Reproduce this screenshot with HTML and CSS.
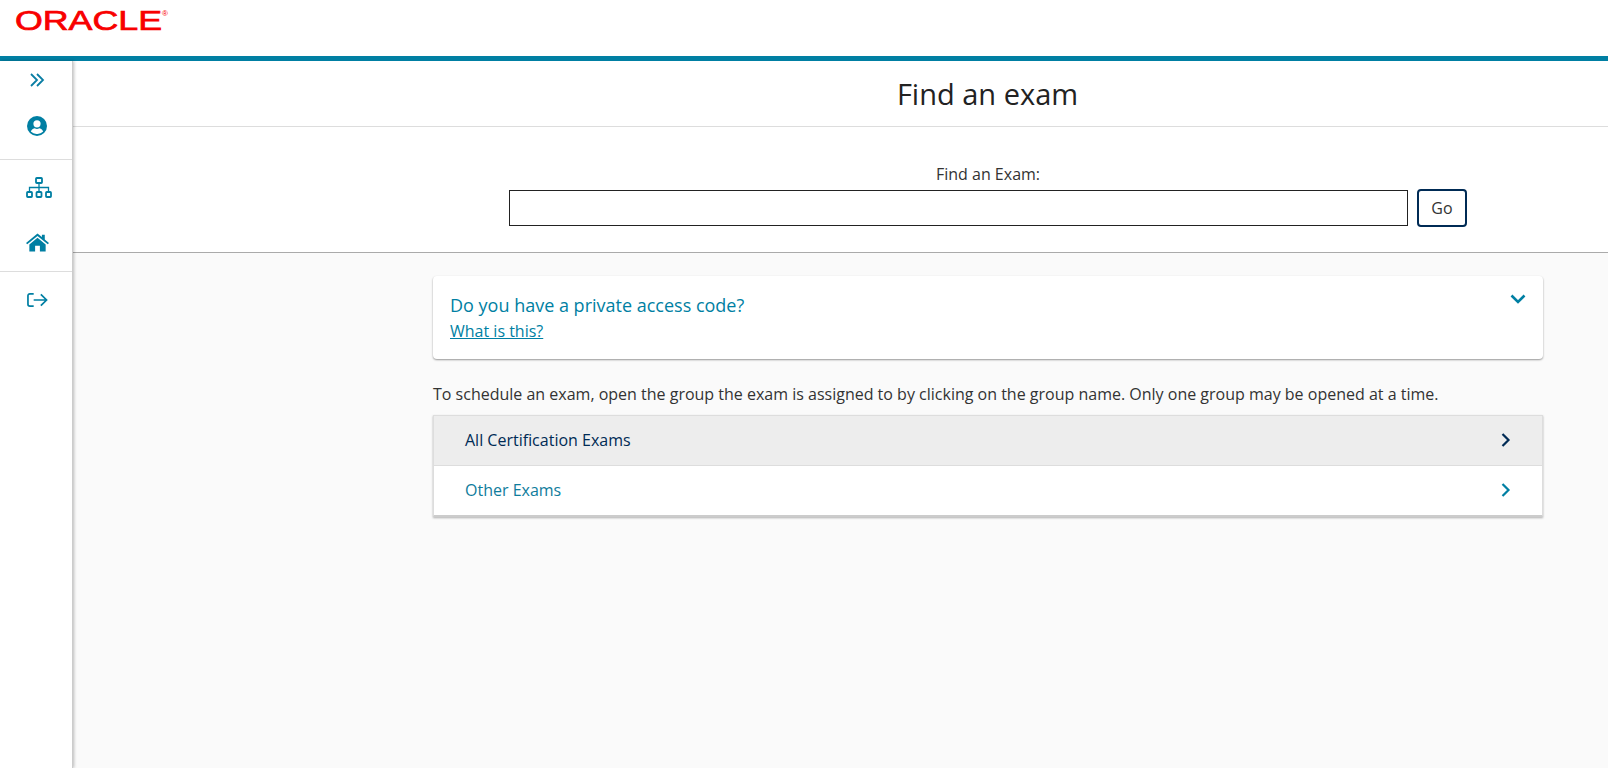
FILE: index.html
```html
<!DOCTYPE html>
<html lang="en">
<head>
<meta charset="utf-8">
<title>Find an exam</title>
<link rel="stylesheet" href="styles.css">
</head>
<body>
<header class="topbar">
  <svg class="logo" width="170" height="36" viewBox="0 0 170 36" role="img" aria-label="Oracle">
    <text class="logo-text" x="0" y="30" textLength="147" lengthAdjust="spacingAndGlyphs">ORACLE</text>
    <text class="logo-reg" x="147" y="16">®</text>
  </svg>
</header>
<div class="shell">
  <nav class="sidebar">
    <div class="nav-group nav-first">
      <svg class="ic-expand" width="16" height="14" viewBox="0 0 16 14"><path d="M2 1l6 6-6 6M8 1l6 6-6 6" fill="none" stroke="#0a7ea4" stroke-width="1.8"/></svg>
      <svg class="ic-user" width="20" height="20" viewBox="0 0 20 20"><circle cx="10" cy="10" r="10" fill="#007fa3"/><circle cx="10" cy="7.8" r="3.6" fill="#fff"/><path d="M3.8 15.6c1-2.6 3-3.3 3.9-3.3.8.4 1.5.6 2.3.6s1.500-.2 2.300-.6c.9 0 2.900.7 3.900 3.300A8 8 0 0 1 10 18a8 8 0 0 1-6.200-2.400z" fill="#fff"/></svg>
    </div>
    <div class="nav-group nav-second">
      <svg class="ic-tree" width="26" height="21" viewBox="0 0 26 21"><g fill="none" stroke="#007fa3" stroke-width="1.800"><rect x="10" y="1" width="6" height="5" rx=".8"/><rect x="1" y="15" width="5" height="5" rx=".8"/><rect x="10.500" y="15" width="5" height="5" rx=".8"/><rect x="20" y="15" width="5" height="5" rx=".8"/><path d="M13 6v9M3.500 15v-4.500h19V15" stroke-width="1.300"/></g></svg>
      <svg class="ic-home" width="23" height="19" viewBox="0 0 24 19"><path d="M12 0l4.600 3.800V1.500h3v4.800L24 10l-1.300 1.400L12 2.700 1.300 11.400 0 10z" fill="#007fa3"/><path d="M12 4.600l8.500 7V19h-6v-6h-5v6h-6v-7.400z" fill="#007fa3"/></svg>
    </div>
    <div class="nav-group nav-third">
      <svg class="ic-logout" width="21" height="16" viewBox="0 0 22 16"><path d="M7 1.500H3a2 2 0 0 0-2 2v9a2 2 0 0 0 2 2h4M7 8h13M14.500 2l6 6-6 6" fill="none" stroke="#007fa3" stroke-width="1.800"/></svg>
    </div>
  </nav>
  <main class="main">
    <div class="title-row"><h1 class="title">Find an exam</h1></div>
    <section class="search">
      <label class="search-label" for="exam">Find an Exam:</label>
      <div class="search-row">
        <input class="search-input" id="exam" type="text">
        <button class="go" type="button">Go</button>
      </div>
    </section>
    <div class="content">
      <section class="code-card">
        <div class="code-text">
          <h2 class="code-title">Do you have a private access code?</h2>
          <a class="code-link" href="#">What is this?</a>
        </div>
        <svg class="code-chev" width="16" height="10" viewBox="0 0 16 10"><path d="M1.500 1.500L8 8l6.500-6.500" fill="none" stroke="#007fa3" stroke-width="2.600"/></svg>
      </section>
      <p class="intro">To schedule an exam, open the group the exam is assigned to by clicking on the group name. Only one group may be opened at a time.</p>
      <div class="groups">
        <div class="group group-active">
          <span>All Certification Exams</span>
          <svg width="10" height="14" viewBox="0 0 10 14"><path d="M1.500 1l6 6-6 6" fill="none" stroke="#002b55" stroke-width="2.200"/></svg>
        </div>
        <div class="group group-plain">
          <span>Other Exams</span>
          <svg width="10" height="14" viewBox="0 0 10 14"><path d="M1.500 1l6 6-6 6" fill="none" stroke="#007fa3" stroke-width="2.200"/></svg>
        </div>
      </div>
    </div>
  </main>
</div>
</body>
</html>
```
FILE: styles.css
```css
* { box-sizing: border-box; }
html, body { margin: 0; height: 100%; }
body {
  font-family: "Open Sans", "Liberation Sans", sans-serif;
  color: #333;
  background: #fff;
  overflow: hidden;
}
.topbar {
  height: 61px;
  background: #fff;
  border-bottom: 5px solid #007fa3;
  padding: 0 0 0 15px;
}
.logo { display: block; }
.logo-text {
  font-family: "Liberation Sans", sans-serif;
  font-weight: 400;
  font-size: 27px;
  fill: #f80000;
  stroke: #f80000;
  stroke-width: .7px;
}
.logo-reg {
  font-family: "Liberation Sans", sans-serif;
  font-size: 8px;
  fill: #f80000;
}
.shell { display: flex; height: 707px; }
.sidebar {
  width: 73px;
  flex: none;
  background: #fff;
  border-right: 1px solid #ccc;
  box-shadow: 1px 0 3px rgba(0,0,0,.25);
  position: relative;
  z-index: 1;
}
.nav-group {
  display: flex;
  flex-direction: column;
  align-items: center;
  padding-left: 2px;
  border-bottom: 1px solid #ddd;
}
.nav-first { height: 99px; padding-top: 12px; gap: 29px; }
.nav-second { height: 112px; padding-top: 17px; gap: 35px; }
.ic-tree { margin-left: 3px; }
.nav-third { border-bottom: 0; padding-top: 20px; }
.main {
  flex: 1;
  display: flex;
  flex-direction: column;
  background: #fafafa;
}
.title-row {
  height: 66px;
  flex: none;
  background: #fff;
  border-bottom: 1px solid #ddd;
  padding: 0 67px 0 361px;
  display: flex;
  align-items: center;
  justify-content: center;
}
.title {
  margin: 1px 0 0;
  font-size: 29px;
  font-weight: 400;
  color: #222;
  line-height: 38px;
}
.search {
  height: 126px;
  flex: none;
  background: #fff;
  border-bottom: 1px solid #aaa;
  padding-top: 36px;
  display: flex;
  flex-direction: column;
  align-items: center;
  padding-left: 361px;
  padding-right: 66px;
}
.search-label { font-size: 16px; line-height: 22px; color: #333; }
.search-row { display: flex; align-items: center; gap: 9px; margin-top: 4px; margin-left: 0; }
.search-input {
  width: 899px;
  height: 36px;
  border: 1px solid #222;
  background: #fff;
}
.go {
  width: 50px;
  height: 38px;
  border: 2px solid #002b55;
  border-radius: 4px;
  background: #fff;
  color: #333;
  font: 16px "Open Sans", sans-serif;
  padding: 0;
}
.content { padding: 23px 65px 0 360px; }
.code-card {
  height: 83px;
  background: #fff;
  border-radius: 4px;
  box-shadow: 0 1px 2px rgba(0,0,0,.4);
  padding: 16px 17px 0 17px;
  display: flex;
  justify-content: space-between;
  align-items: flex-start;
}
.code-title {
  margin: 0;
  font-size: 18px;
  font-weight: 400;
  line-height: 26px;
  color: #007fa3;
}
.code-link {
  display: block;
  margin-top: 2px;
  font-size: 16px;
  line-height: 22px;
  color: #007fa3;
  text-decoration: underline;
}
.code-chev { margin-top: 2px; }
.intro {
  margin: 24px 0 10px;
  font-size: 16px;
  line-height: 22px;
  color: #333;
}
.groups {
  border: 1px solid #ddd;
  border-bottom: 2px solid #ccc;
  box-shadow: 0 1px 2px rgba(0,0,0,.3);
}
.group {
  height: 50px;
  background: #fff;
  color: #0f7c9c;
  font-size: 16px;
  padding: 0 31px 2px 31px;
  display: flex;
  align-items: center;
  justify-content: space-between;
}
.group-plain { height: 49px; }
.group-active {
  background: #ededed;
  color: #002b55;
  border-bottom: 1px solid #ddd;
}
```
